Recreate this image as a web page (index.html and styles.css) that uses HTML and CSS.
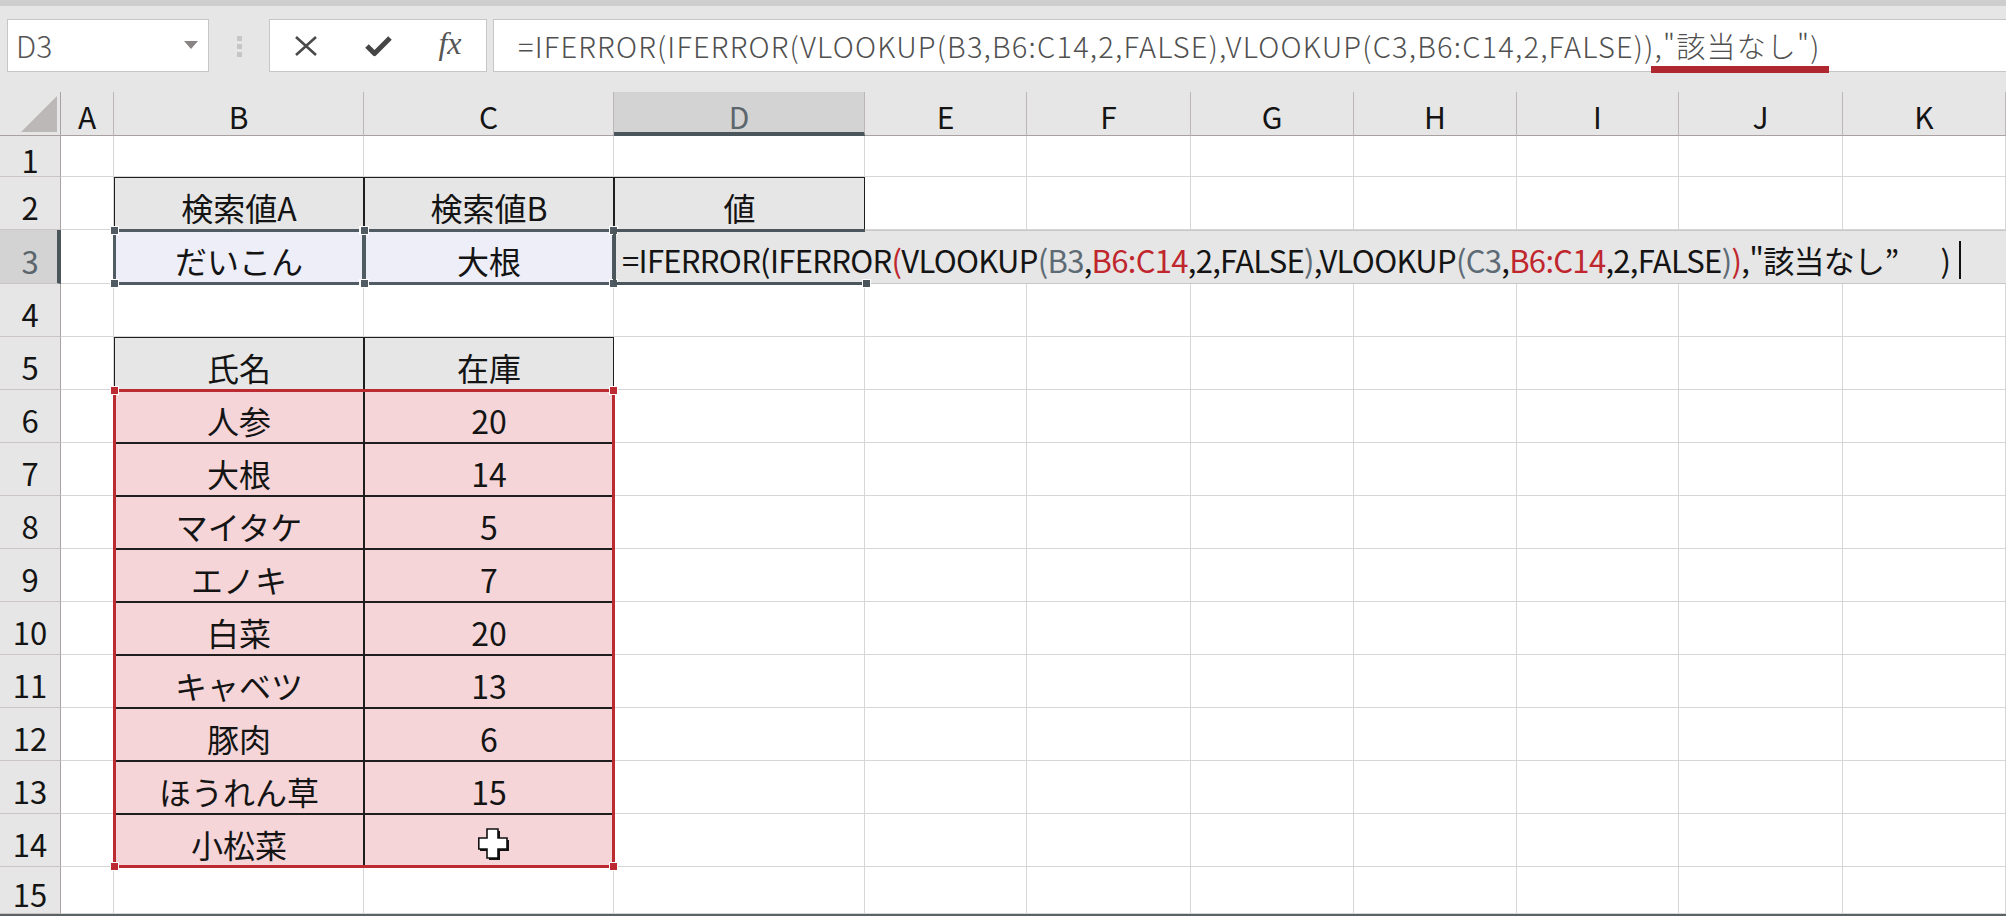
FILE: index.html
```html
<!DOCTYPE html>
<html lang="ja">
<head>
  <meta charset="UTF-8">
  <title>IFERROR VLOOKUP</title>
  <link rel="stylesheet" href="styles.css">
</head>
<body>
  <div class="title-strip"></div>

  <div class="toolbar">
    <div class="name-box">
      <span>D3</span>
      <svg width="14" height="8" viewBox="0 0 14 8"><polygon points="0,0 14,0 7,8" fill="#8b8484"/></svg>
    </div>
    <div class="grip"><i></i><i></i><i></i></div>
    <div class="fx-buttons">
      <span>
        <svg width="24" height="20" viewBox="0 0 24 20">
          <path d="M2 1 L22 19 M22 1 L2 19" stroke="#4a4a4a" stroke-width="2.6" fill="none"/>
        </svg>
      </span>
      <span>
        <svg width="27" height="22" viewBox="0 0 27 22">
          <path d="M2 11 L9.5 18.5 L25 3" stroke="#454545" stroke-width="5" fill="none" stroke-linejoin="round"/>
        </svg>
      </span>
      <span class="fx-label">fx</span>
    </div>
    <div class="formula-bar">=IFERROR(IFERROR(VLOOKUP(B3,B6:C14,2,FALSE),VLOOKUP(C3,B6:C14,2,FALSE))<span class="flag">,"該当なし")</span></div>
  </div>

  <div class="grid-wrap">
    <div class="sheet" id="sheet"></div>

    <div class="layer">
      <div class="ref ref-b3"><i class="handle tl"></i><i class="handle tr"></i><i class="handle bl"></i><i class="handle br"></i></div>
      <div class="ref ref-c3"><i class="handle tl"></i><i class="handle tr"></i><i class="handle bl"></i><i class="handle br"></i></div>
      <div class="ref ref-range red"><i class="handle tl"></i><i class="handle tr"></i><i class="handle bl"></i><i class="handle br"></i></div>

      <div class="edit">=IFERROR(IFERROR<span class="r">(</span>VLOOKUP<span class="g">(B3</span>,<span class="r">B6:C14</span>,2,FALSE<span class="g">)</span>,VLOOKUP<span class="g">(C3</span>,<span class="r">B6:C14</span>,2,FALSE<span class="g">)</span><span class="r">)</span>,"該当なし<span class="wide-quote">”</span>)<span class="caret"></span></div>
      <div class="active-cell"><i class="handle br"></i></div>

      <div class="pointer">
        <svg width="34" height="34" viewBox="0 0 34 34">
          <path d="M11 3 H22 V12 H31 V23 H22 V32 H11 V23 H2 V12 H11 Z" fill="#111"/>
          <path d="M9 1 H20 V10 H29 V21 H20 V30 H9 V21 H0.8 V10 H9 Z" fill="#fff" stroke="#111" stroke-width="1.6"/>
        </svg>
      </div>
    </div>
  </div>

  <script>
    const sheet = document.getElementById('sheet');
    const letters = ['A', 'B', 'C', 'D', 'E', 'F', 'G', 'H', 'I', 'J', 'K'];

    // table contents by row number, starting at column B
    const rows = {
      2: { cls: 'boxed head', values: ['検索値A', '検索値B', '値'] },
      3: { cls: 'boxed key', values: ['だいこん', '大根'] },
      5: { cls: 'boxed head', values: ['氏名', '在庫'] }
    };
    const stock = [
      ['人参', 20], ['大根', 14], ['マイタケ', 5], ['エノキ', 7], ['白菜', 20],
      ['キャベツ', 13], ['豚肉', 6], ['ほうれん草', 15], ['小松菜', '']
    ];
    stock.forEach((item, i) => { rows[i + 6] = { cls: 'boxed stock', values: item }; });

    function addCell(className, text) {
      const div = document.createElement('div');
      div.className = className;
      div.textContent = text;
      sheet.appendChild(div);
    }

    addCell('corner', '');
    letters.forEach(l => addCell(l === 'D' ? 'col-head active' : 'col-head', l));

    for (let r = 1; r <= 15; r++) {
      addCell(r === 3 ? 'row-head active' : 'row-head', r);
      letters.forEach((l, c) => {
        const row = rows[r];
        const idx = c - 1;
        if (row && idx >= 0 && idx < row.values.length) {
          addCell('cell ' + row.cls, row.values[idx]);
        } else {
          addCell('cell', '');
        }
      });
    }
  </script>
</body>
</html>
```

FILE: styles.css
```css
* {
  box-sizing: border-box;
}

body {
  margin: 0;
  width: 2006px;
  height: 916px;
  overflow: hidden;
  background: #fff;
  font-family: "Noto Sans CJK JP", "Noto Sans", sans-serif;
  color: #141414;
}

.title-strip {
  height: 6px;
  background: #cecece;
}

/* name box + formula bar */
.toolbar {
  display: flex;
  align-items: flex-start;
  height: 86px;
  padding: 13px 0 0 7px;
  background: #e6e6e6;
}

.name-box {
  display: flex;
  align-items: center;
  justify-content: space-between;
  width: 202px;
  height: 53px;
  padding: 0 10px 2px 8px;
  background: #fff;
  border: 1px solid #c6c6c6;
  font-size: 30px;
  font-weight: 300;
  color: #555;
}

.grip {
  display: flex;
  flex-direction: column;
  align-items: center;
  gap: 3px;
  width: 60px;
  padding-top: 17px;
}

.grip i {
  width: 5px;
  height: 5px;
  background: #c6c6c6;
}

.fx-buttons {
  display: flex;
  width: 218px;
  height: 53px;
  background: #fff;
  border: 1px solid #c6c6c6;
}

.fx-buttons span {
  flex: 1;
  display: flex;
  align-items: center;
  justify-content: center;
}

.fx-label {
  font-family: "Liberation Serif", serif;
  font-style: italic;
  font-size: 32px;
  color: #555;
  padding-bottom: 4px;
}

.formula-bar {
  position: relative;
  flex: 1;
  height: 53px;
  margin-left: 6px;
  padding: 0 0 2px 24px;
  display: flex;
  align-items: center;
  background: #fff;
  border: 1px solid #c6c6c6;
  border-right: 0;
  font-size: 29px;
  font-weight: 300;
  letter-spacing: 1.2px;
  color: #505050;
  white-space: nowrap;
}

.flag {
  position: relative;
}

.flag::after {
  content: "";
  position: absolute;
  left: -4px;
  right: -8px;
  top: 100%;
  height: 7px;
  background: #b0282f;
}

/* worksheet */
.grid-wrap {
  --cols: 61px 53px 250px 250px 251px 162px 164px 163px 163px 162px 164px 163px;
  --rows: 44px 41px 53px 54px 53px 53px repeat(9, 53px) 47px;
  position: relative;
  border-bottom: 2px solid #5b6266;
}

.sheet,
.layer {
  display: grid;
  grid-template-columns: var(--cols);
  grid-template-rows: var(--rows);
}

.layer {
  position: absolute;
  inset: 0;
  pointer-events: none;
}

.corner {
  position: relative;
  background: #e6e6e6;
  border-right: 1px solid #aaa3a3;
  border-bottom: 1px solid #a9a1a1;
}

.corner::after {
  content: "";
  position: absolute;
  right: 3px;
  bottom: 3px;
  width: 36px;
  height: 36px;
  background: #bdb8b8;
  clip-path: polygon(100% 0, 100% 100%, 0 100%);
}

.col-head {
  display: flex;
  align-items: center;
  justify-content: center;
  padding-top: 5px;
  background: #e6e6e6;
  border-right: 1px solid #bdb6b6;
  border-bottom: 1px solid #a9a1a1;
  font-size: 30px;
  line-height: 1;
}

.col-head.active {
  background: #d3d3d3;
  color: #5b656c;
  border-bottom: 4px solid #4b555c;
  padding-top: 8px;
}

.row-head {
  display: flex;
  align-items: center;
  justify-content: center;
  padding-top: 7px;
  background: #e6e6e6;
  border-right: 1px solid #aaa3a3;
  border-bottom: 1px solid #cac4c4;
  font-size: 31px;
  line-height: 1;
}

.row-head.active {
  background: #d3d3d3;
  color: #5b656c;
  border-right: 4px solid #4b555c;
  padding-left: 3px;
}

.cell {
  display: flex;
  align-items: center;
  justify-content: center;
  padding-top: 6px;
  border-right: 1px solid #d6d6d6;
  border-bottom: 1px solid #d6d6d6;
  font-size: 32px;
  line-height: 1;
}

.cell.boxed {
  border: 1px solid #1e1e1e;
}

.cell.head {
  background: #e7e6e6;
}

.cell.key {
  background: #eeeef8;
}

.cell.stock {
  background: #f5d5d8;
}

/* formula reference outlines */
.ref {
  position: relative;
  margin: -1px;
  border: 3px solid #505b64;
  color: #505b64;
}

.ref.red {
  border-color: #bc2b32;
  color: #bc2b32;
}

.ref-b3 { grid-area: 4 / 3 / 5 / 4; }
.ref-c3 { grid-area: 4 / 4 / 5 / 5; }
.ref-range { grid-area: 7 / 3 / 16 / 5; }

.handle {
  position: absolute;
  width: 9px;
  height: 9px;
  background: currentColor;
  border: 1px solid #fff;
}

.tl { left: -6px; top: -6px; }
.tr { right: -6px; top: -6px; }
.bl { left: -6px; bottom: -6px; }
.br { right: -6px; bottom: -6px; }

/* D3 in edit mode, text running over the next columns */
.edit {
  grid-area: 4 / 5 / 5 / 13;
  display: flex;
  align-items: center;
  padding: 5px 0 0 8px;
  background: #e6e6e6;
  border-top: 1px solid #c8c8c8;
  border-bottom: 1px solid #c8c8c8;
  font-size: 31px;
  letter-spacing: -0.7px;
  line-height: 1;
  white-space: nowrap;
}

.edit .r { color: #c0262d; }
.edit .g { color: #5e6b75; }

/* full-width closing quote */
.wide-quote {
  display: inline-block;
  width: 56px;
}

.caret {
  display: inline-block;
  width: 2px;
  height: 38px;
  margin-left: 9px;
  background: #111;
}

.active-cell {
  grid-area: 4 / 5 / 5 / 6;
  position: relative;
  margin: -1px 0 -1px -1px;
  border: 3px solid #4b555c;
  border-right: 0;
  color: #4b555c;
}

.pointer {
  grid-area: 15 / 4 / 16 / 5;
  position: relative;
}

.pointer svg {
  position: absolute;
  left: 114px;
  top: 14px;
}
```
